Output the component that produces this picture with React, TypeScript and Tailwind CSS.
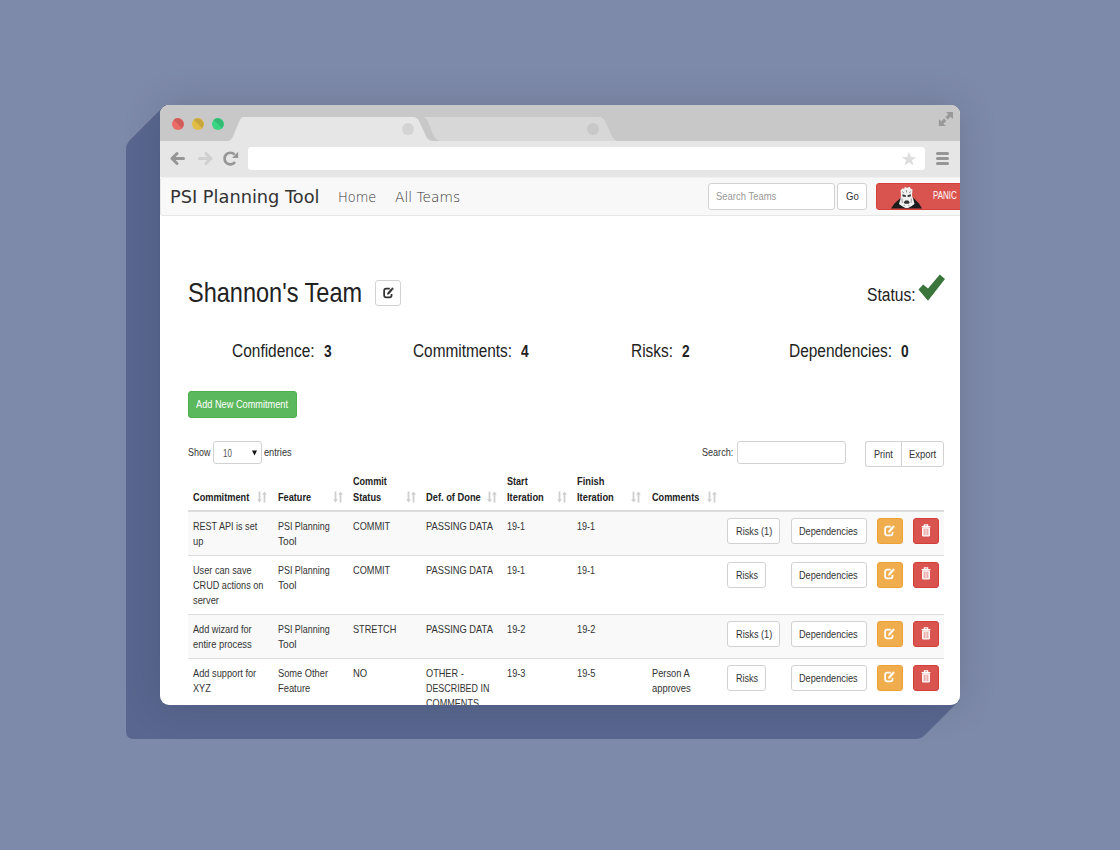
import { useLayoutEffect, useRef, type ReactNode } from "react";

/** Condensed text: squeezes its natural width to `w` pixels. */
function T({ w, className = "", children }: { w: number; className?: string; children: ReactNode }) {
  const inner = useRef<HTMLSpanElement>(null);
  useLayoutEffect(() => {
    const el = inner.current;
    if (el && el.offsetWidth) el.style.transform = `scaleX(${w / el.offsetWidth})`;
  }, [w]);
  return (
    <span className={`block shrink-0 whitespace-nowrap ${className}`} style={{ width: w }}>
      <span ref={inner} className="inline-block origin-left">
        {children}
      </span>
    </span>
  );
}

function EditIcon({ className = "" }: { className?: string }) {
  return (
    <svg viewBox="0 0 10 11" className={`h-[12px] w-[11px] ${className}`} fill="none" stroke="currentColor">
      <path d="M6.2 1.5H3Q1 1.5 1 3.5V7.6Q1 9.6 3 9.6H5.8Q7.8 9.6 7.8 7.6V6.4" strokeWidth="1.6" />
      <path d="M3.7 7.2L4 5.3L7.6 1.2L9.1 2.6L5.5 6.7Z" fill="currentColor" stroke="none" />
      <path d="M8 .7L9.6 2.1" strokeWidth="1" />
    </svg>
  );
}

function TrashIcon() {
  return (
    <svg viewBox="0 0 10 13" className="h-[13px] w-[10px]" fill="none" stroke="#fff">
      <path d="M3.4 2.2V.9H6.6V2.2M.6 2.7H9.4" strokeWidth="1.3" />
      <path d="M1.6 3.8H8.4V12H1.6Z" fill="#fff" fillOpacity=".75" strokeWidth="1" />
      <path d="M3.7 5V11M6.3 5V11" stroke="#e59a98" strokeWidth=".8" />
    </svg>
  );
}

function SortIcon() {
  return (
    <svg viewBox="0 0 10 12" className="h-3 w-[10px]" fill="#cfcfcf">
      <path d="M1.6 .5H3.4V8.3H4.9L2.5 11.5L.1 8.3H1.6ZM6.6 11.5H8.4V3.7H9.9L7.5 .5L5.1 3.7H6.6Z" />
    </svg>
  );
}

const outline = "flex items-center justify-center rounded-[3px] border border-[#d2d2d2] bg-white text-[#333]";

function Chrome() {
  return (
    <div className="shrink-0">
      <svg viewBox="0 0 800 36" className="block h-9 w-[800px]">
        <rect width="800" height="36" fill="#c8c8c8" />
        <path d="M264 12H439Q443 12 445 16L451 29Q454 36 458 36H281Q276 36 273 29L268 17Q266 12 262 12Z" fill="#d7d7d7" />
        <path d="M68 36Q72 35 74 29L79 17Q81 12 84 12H253Q257 12 259 16L265 29Q267 35 272 36Z" fill="#e6e6e6" />
        <circle cx="248" cy="24" r="6" fill="#d3d3d3" />
        <circle cx="433" cy="24" r="6" fill="#c8c8c8" />
        <circle cx="18" cy="19" r="6" fill="#e96c68" />
        <path d="M13.8 14.8A6 6 0 0 1 22.2 23.2Z" fill="#cd5c5a" />
        <circle cx="38" cy="19" r="6" fill="#e2bd45" />
        <path d="M33.8 14.8A6 6 0 0 1 42.2 23.2Z" fill="#c6a63d" />
        <circle cx="58" cy="19" r="6" fill="#3ad483" />
        <path d="M53.8 14.8A6 6 0 0 1 62.2 23.2Z" fill="#33b974" />
        <path d="M786 7H793V14L790.7 11.7L787.8 14.6L785.4 12.2L788.3 9.3ZM785.8 21H778.8V14L781.1 16.3L784 13.4L786.4 15.8L783.5 18.7Z" fill="#999" />
      </svg>
      <div className="flex h-9 items-center bg-[#e6e6e6]">
        <svg viewBox="0 0 88 36" className="h-9 w-[88px]" fill="none" strokeLinecap="round" strokeLinejoin="round">
          <path d="M23.5 17.5H12M17 12.5L12 17.5L17 22.5" stroke="#969696" strokeWidth="3" />
          <path d="M39.5 17.5H51M46 12.5L51 17.5L46 22.5" stroke="#cfcfcf" strokeWidth="3" />
          <path d="M75 21A5.8 5.8 0 1 1 74.6 13.6" stroke="#969696" strokeWidth="2.7" strokeLinecap="butt" />
          <path d="M78.2 10.8V17H72Z" fill="#969696" />
        </svg>
        <div className="mb-px flex h-[23px] w-[677px] items-center justify-end rounded-[3px] bg-white pr-[8.5px]">
          <svg viewBox="0 0 16 16" className="h-4 w-4" fill="#dedede">
            <path d="M8 .8L9.9 6H15.2L11 9.2L12.5 14.5L8 11.4L3.5 14.5L5 9.2L.8 6H6.1Z" />
          </svg>
        </div>
        <div className="mb-px ml-[11px] flex w-[13px] flex-col gap-[2px]">
          <div className="h-[3px] rounded-full bg-[#969696]" />
          <div className="h-[3px] rounded-full bg-[#969696]" />
          <div className="h-[3px] rounded-full bg-[#969696]" />
        </div>
      </div>
    </div>
  );
}

function Nav() {
  return (
    <nav className="flex h-[39px] shrink-0 items-center rounded-l-[3px] border-y border-l border-[#e7e7e7] border-t-[#f0f0f0] bg-[#f8f8f8] pb-px pl-[9px] font-['DejaVu_Sans',sans-serif]">
      <T w={150} className="mt-px text-[18px] leading-6 text-[#333]">PSI Planning Tool</T>
      <T w={38} className="mt-[2px] ml-[18px] text-[14px] leading-6 font-extralight text-[#333]">Home</T>
      <T w={65} className="mt-[2px] ml-[19px] text-[14px] leading-6 font-extralight text-[#333]">All Teams</T>
      <div className="ml-[248px] flex h-[27px] w-[127px] shrink-0 items-center rounded-[3px] border border-[#d2d2d2] bg-white pt-px pl-[7px] font-['Liberation_Sans',sans-serif]">
        <T w={60} className="text-[11.5px] text-[#999]">Search Teams</T>
      </div>
      <div className={`${outline} ml-[2px] h-[27px] w-[30px] shrink-0 pt-px font-['Liberation_Sans',sans-serif]`}>
        <T w={12.5} className="text-[11.5px]">Go</T>
      </div>
      <div className="ml-[9px] flex h-[27px] w-[100px] shrink-0 items-center rounded-[3px] border border-[#d43f3a] bg-[#d9534f] pl-[14px] font-['Liberation_Sans',sans-serif]">
        <svg viewBox="0 0 32 23" className="mt-[2px] h-[23px] w-8 shrink-0">
          <path d="M0 22.5L3.5 17.5L9 12.5L12 10H20L23 12.5L28 17.5L31 22.5Z" fill="#1c1c1c" />
          <path d="M10 9L9.5 4.5L11.5 2.2L13 3L14 .8L16 2L18.5 .7L19.5 2.6L21.5 3.5L21 9.5L22.2 13L23.5 18L20 20.5L17 22H14.5L11.5 20.5L8 18L9.5 13Z" fill="#f1f1f1" />
          <path d="M11.5 8.3L14.8 9.3V11L11.5 10.4ZM19.8 8.3L16.6 9.3V11L19.8 10.4ZM12.8 16.5L14.2 14.6H17.3L18.7 16.5L17.6 17.8H13.9Z" fill="#333" />
          <path d="M11 5.5L13 7M15.5 4V6.5M20 5.5L18 7M12.5 20L14 19M18.7 20L17.2 19M11 12.5L11.3 17M20.4 12.5L20.1 17" stroke="#888" strokeWidth=".8" fill="none" />
        </svg>
        <T w={24} className="-mt-[2px] ml-[9.5px] text-[10px] text-white">PANIC</T>
      </div>
    </nav>
  );
}

function Stat({ label, value, w, className }: { label: string; value: string; w: number; className: string }) {
  return (
    <div className={`flex shrink-0 items-baseline text-[18px] leading-6 text-[#222] ${className}`}>
      <T w={w}>{label}</T>
      <T w={7.5} className="ml-[9.5px] text-[16.5px] font-bold">{value}</T>
    </div>
  );
}

type Line = [string, number];
const cols = "grid grid-cols-[84.5px_75.5px_72.5px_81px_70px_75.5px_75px_63.5px_86.5px_36px_31px] pl-[5px]";

const headers: { lines: Line[]; gap: string }[] = [
  { lines: [["Commitment", 56]], gap: "pr-[11px]" },
  { lines: [["Feature", 33.5]], gap: "pr-[10px]" },
  { lines: [["Commit", 34], ["Status", 28]], gap: "pr-[10px]" },
  { lines: [["Def. of Done", 55]], gap: "pr-[10px]" },
  { lines: [["Start", 20.5], ["Iteration", 36.5]], gap: "pr-[10px]" },
  { lines: [["Finish", 27.5], ["Iteration", 36.5]], gap: "pr-[11px]" },
  { lines: [["Comments", 47]], gap: "pr-[10px]" },
];

const psi: Line[] = [["PSI Planning", 52], ["Tool", 18.5]];
const passing: Line[] = [["PASSING DATA", 66.5]];
const rows: { cells: Line[][]; risks: Line }[] = [
  {
    cells: [[["REST API is set", 64.5], ["up", 10.5]], psi, [["COMMIT", 37.5]], passing, [["19-1", 18]], [["19-1", 18]], []],
    risks: ["Risks (1)", 36],
  },
  {
    cells: [[["User can save", 59], ["CRUD actions on", 70.5], ["server", 26]], psi, [["COMMIT", 37.5]], passing, [["19-1", 18]], [["19-1", 18]], []],
    risks: ["Risks", 22],
  },
  {
    cells: [[["Add wizard for", 59], ["entire process", 58.5]], psi, [["STRETCH", 43]], passing, [["19-2", 18.5]], [["19-2", 18.5]], []],
    risks: ["Risks (1)", 36],
  },
  {
    cells: [
      [["Add support for", 63.5], ["XYZ", 17.5]],
      [["Some Other", 50], ["Feature", 32.5]],
      [["NO", 14]],
      [["OTHER -", 37.5], ["DESCRIBED IN", 63.5], ["COMMENTS", 53]],
      [["19-3", 18.5]],
      [["19-5", 18.5]],
      [["Person A", 38], ["approves", 38.5]],
    ],
    risks: ["Risks", 22],
  },
];

function Table() {
  return (
    <div className="mt-[7px] w-[756px] text-[11.5px] leading-[15.4px] text-[#333]">
      <div className={`${cols} h-[38px] items-end border-b-2 border-[#ddd] pb-[5px] font-bold text-[#222]`}>
        {headers.map((h) => (
          <div key={h.lines[0][0]} className={`flex items-end justify-between ${h.gap}`}>
            <div>
              {h.lines.map(([text, w]) => (
                <T key={text} w={w}>{text}</T>
              ))}
            </div>
            <div className="pb-[2px]">
              <SortIcon />
            </div>
          </div>
        ))}
      </div>
      {rows.map((r, i) => (
        <div key={i} className={`${cols} border-b border-[#ddd] pt-[6px] pb-[6px] ${i % 2 ? "bg-white" : "bg-[#f9f9f9]"}`}>
          {r.cells.map((cell, j) => (
            <div key={j} className="pt-[.8px] -mb-[.8px]">
              {cell.map(([text, w]) => (
                <T key={text} w={w}>{text}</T>
              ))}
            </div>
          ))}
          <div>
            <div className={`${outline} h-[26px] pt-px ${r.risks[1] > 30 ? "w-[53px]" : "w-[39px]"}`}>
              <T w={r.risks[1]}>{r.risks[0]}</T>
            </div>
          </div>
          <div className={`${outline} h-[26px] w-[76px] pt-px`}>
            <T w={59}>Dependencies</T>
          </div>
          <div className="flex h-[26px] w-[26px] items-center justify-center rounded-[3px] border border-[#eea236] bg-[#f0ad4e] text-white">
            <EditIcon className="-mt-px -ml-px" />
          </div>
          <div className="flex h-[26px] w-[26px] items-center justify-center rounded-[3px] border border-[#d43f3a] bg-[#d9534f]">
            <div className="-mt-[2px]">
              <TrashIcon />
            </div>
          </div>
        </div>
      ))}
    </div>
  );
}

function TeamPage() {
  return (
    <main className="flex flex-col pr-4 pl-7 pt-[58px] font-['Liberation_Sans',sans-serif]">
      <div className="flex h-9 items-center">
        <T w={174.5} className="mt-[2px] text-[27.5px] leading-9 text-[#222]">Shannon's Team</T>
        <div className={`${outline} ml-[12.5px] mt-[2px] h-[26px] w-[26px]`}>
          <EditIcon />
        </div>
        <div className="-mr-[1.5px] ml-auto flex items-center">
          <T w={48.5} className="mt-[6px] text-[18px] leading-6 text-[#222]">Status:</T>
          <svg viewBox="0 0 28 28" className="-mt-[9px] ml-[2px] h-7 w-7">
            <path d="M.5 15.5L5.2 10.5L10 14.6L21.8 .6L27 5L10 26.8Z" fill="#3a763c" />
          </svg>
        </div>
      </div>
      <div className="mt-[29px] flex h-6">
        <Stat label="Confidence:" value="3" w={82.5} className="ml-[44px]" />
        <Stat label="Commitments:" value="4" w={99} className="ml-[81px]" />
        <Stat label="Risks:" value="2" w={42} className="ml-[102px]" />
        <Stat label="Dependencies:" value="0" w={103} className="ml-[99px]" />
      </div>
      <div className="mt-[28px] flex h-[27px] w-[108.5px] items-center justify-center rounded-[3px] border border-[#4cae4c] bg-[#5cb85c] pt-px text-[11.5px] text-white">
        <T w={92}>Add New Commitment</T>
      </div>
      <div className="mt-[23px] flex h-[26px] items-start text-[11.5px] leading-[22px] text-[#333]">
        <T w={22.5}>Show</T>
        <div className="ml-[2.5px] flex h-[23px] w-[49px] items-center justify-between rounded-[3px] border border-[#d2d2d2] bg-white pr-[4px] pl-[9px] text-[#555]">
          <T w={9}>10</T>
          <svg viewBox="0 0 5 6" className="h-[6px] w-[5px]">
            <path d="M0 .5H5L2.5 5.5Z" fill="#111" />
          </svg>
        </div>
        <T w={28} className="ml-[2px]">entries</T>
        <T w={31.5} className="ml-auto">Search:</T>
        <div className="ml-[4px] h-[23px] w-[109px] rounded-[3px] border border-[#d2d2d2] bg-white" />
        <div className={`${outline} ml-[19px] h-[26px] w-[36px] rounded-r-none border-r-0`}>
          <T w={19}>Print</T>
        </div>
        <div className={`${outline} h-[26px] w-[43px] rounded-l-none`}>
          <T w={27}>Export</T>
        </div>
      </div>
      <Table />
    </main>
  );
}

export default function App() {
  return (
    <div className="relative flex h-[850px] w-[1120px] items-start justify-center overflow-hidden bg-[#7e8aaa] pt-[105px]">
      <svg viewBox="0 0 1120 850" className="absolute inset-0 h-[850px] w-[1120px]">
        <path d="M165 105L130 140Q126 144 126 150V731Q126 739 134 739H916Q921 739 925 735L960 700Z" fill="#596790" />
      </svg>
      <div className="relative flex h-[600px] w-[800px] flex-col overflow-hidden rounded-[9px] bg-white shadow-[0_0_40px_rgba(0,0,0,0.14)]">
        <Chrome />
        <Nav />
        <TeamPage />
      </div>
    </div>
  );
}
